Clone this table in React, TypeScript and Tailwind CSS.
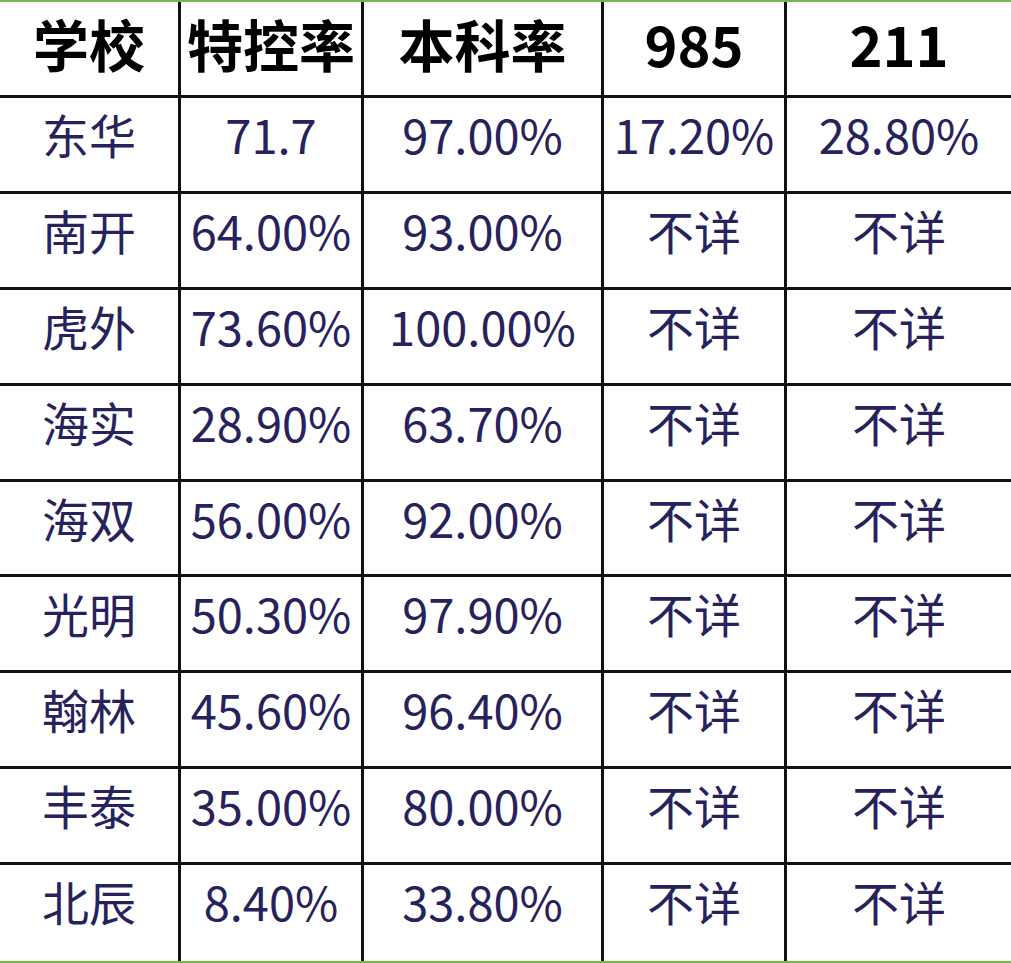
const HEAD = ["学校", "特控率", "本科率", "985", "211"];

const ROWS = [
  ["东华", "71.7", "97.00%", "17.20%", "28.80%"],
  ["南开", "64.00%", "93.00%", "不详", "不详"],
  ["虎外", "73.60%", "100.00%", "不详", "不详"],
  ["海实", "28.90%", "63.70%", "不详", "不详"],
  ["海双", "56.00%", "92.00%", "不详", "不详"],
  ["光明", "50.30%", "97.90%", "不详", "不详"],
  ["翰林", "45.60%", "96.40%", "不详", "不详"],
  ["丰泰", "35.00%", "80.00%", "不详", "不详"],
  ["北辰", "8.40%", "33.80%", "不详", "不详"],
];

const font = { fontFamily: '"Noto Sans CJK SC", "Noto Sans", sans-serif' };

export default function App() {
  return (
    <div className="w-[1011px] h-[963px] bg-white overflow-hidden" style={font}>
      <div className="h-[963px] border-t-2 border-b-2 border-[#74b84f] grid grid-cols-[181px_183px_240px_183px_1fr] grid-rows-[repeat(10,1fr)]">
        {HEAD.map((h, i) => (
          <div
            key={h}
            className={`flex justify-center pt-[13px] border-b-[3px] border-[#111] text-[56px] leading-none font-bold text-black ${i < 4 ? "border-r-[3px]" : ""}`}
          >
            {h}
          </div>
        ))}
        {ROWS.map((r, ri) =>
          r.map((c, ci) => (
            <div
              key={ri + "-" + ci}
              className={`flex justify-center pt-[12px] border-[#111] text-[47px] leading-none text-[#27225c] ${ci < 4 ? "border-r-[3px]" : ""} ${ri < ROWS.length - 1 ? "border-b-[3px]" : ""}`}
            >
              {c}
            </div>
          ))
        )}
      </div>
    </div>
  );
}
